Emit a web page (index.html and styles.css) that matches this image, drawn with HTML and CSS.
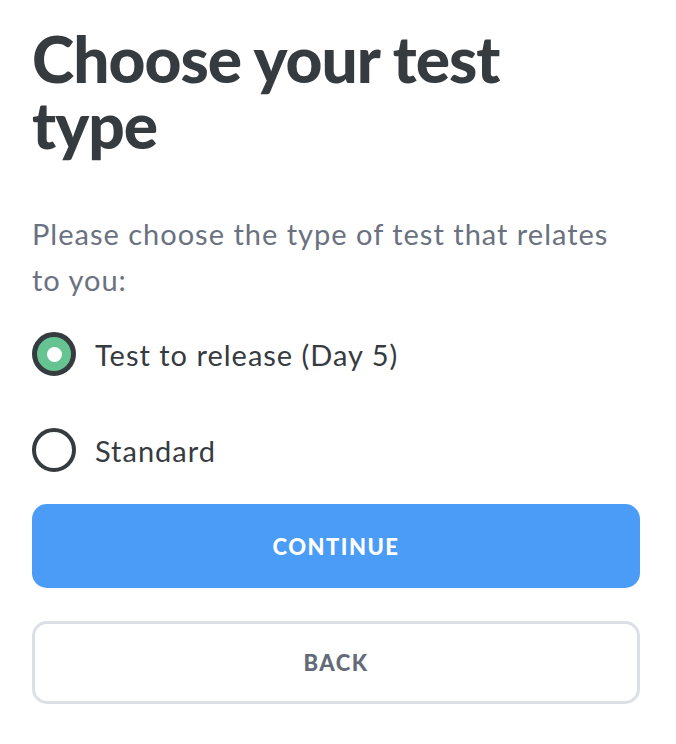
FILE: index.html
```html
<!DOCTYPE html>
<html lang="en">
<head>
<meta charset="utf-8">
<title>Choose your test type</title>
<link rel="stylesheet" href="styles.css">
</head>
<body>
<main class="page">
  <h1 class="title">Choose your test type</h1>
  <p class="intro">Please choose the type of test that relates to you:</p>
  <div class="options">
    <label class="option">
      <span class="radio radio-checked"><span class="dot"></span></span>
      <span class="option-label">Test to release (Day 5)</span>
    </label>
    <label class="option">
      <span class="radio"></span>
      <span class="option-label">Standard</span>
    </label>
  </div>
  <div class="actions">
    <button class="btn btn-primary">CONTINUE</button>
    <button class="btn btn-secondary">BACK</button>
  </div>
</main>
</body>
</html>
```

FILE: styles.css
```css
html, body {
  margin: 0;
  padding: 0;
  background: #ffffff;
}
body {
  font-family: "Lato", "Liberation Sans", sans-serif;
  color: #363b3f;
}
.page {
  padding: 26px 36px 0 32px;
}
.title {
  margin: 0;
  max-width: 540px;
  font-size: 64px;
  line-height: 66px;
  font-weight: 900;
  color: #363b3f;
  letter-spacing: -1px;
}
.intro {
  margin: 53px 0 0;
  font-size: 29px;
  line-height: 46px;
  letter-spacing: 1px;
  color: #6a7180;
}
.options {
  margin-top: 29px;
  display: flex;
  flex-direction: column;
  gap: 52px;
}
.option {
  display: flex;
  align-items: center;
  gap: 19px;
  height: 44px;
}
.radio {
  box-sizing: border-box;
  width: 44px;
  height: 44px;
  border-radius: 50%;
  border: 4px solid #363b3f;
  display: flex;
  align-items: center;
  justify-content: center;
  flex: none;
}
.radio-checked {
  border-width: 5px;
  background: #66c392;
}
.dot {
  width: 15px;
  height: 15px;
  border-radius: 50%;
  background: #ffffff;
}
.option-label {
  font-size: 29px;
  letter-spacing: 1px;
  color: #363b3f;
}
.actions {
  margin-top: 32px;
  display: flex;
  flex-direction: column;
  gap: 33px;
}
.btn {
  box-sizing: border-box;
  width: 100%;
  height: 84px;
  border-radius: 15px;
  font-family: "Lato", "Liberation Sans", sans-serif;
  font-weight: 900;
  font-size: 22px;
  letter-spacing: 1.5px;
  cursor: pointer;
}
.btn-primary {
  background: #4a9cf7;
  border: none;
  color: #ffffff;
}
.btn-secondary {
  height: 83px;
  background: #ffffff;
  border: 3px solid #dcdfe6;
  color: #646b78;
}
```
